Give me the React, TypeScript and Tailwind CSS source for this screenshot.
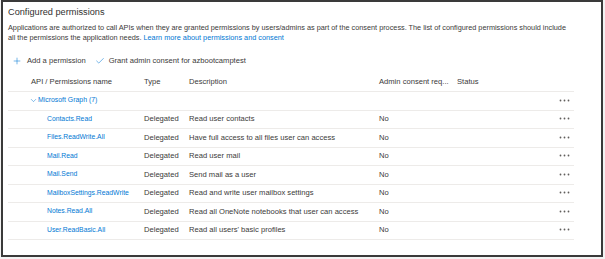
import { Plus, Check, ChevronDown } from 'lucide-react'

const rows = [
  { name: 'Contacts.Read', desc: 'Read user contacts' },
  { name: 'Files.ReadWrite.All', desc: 'Have full access to all files user can access' },
  { name: 'Mail.Read', desc: 'Read user mail' },
  { name: 'Mail.Send', desc: 'Send mail as a user' },
  { name: 'MailboxSettings.ReadWrite', desc: 'Read and write user mailbox settings' },
  { name: 'Notes.Read.All', desc: 'Read all OneNote notebooks that user can access' },
  { name: 'User.ReadBasic.All', desc: "Read all users' basic profiles" },
]

function Dots() {
  return (
    <svg width="11" height="3" viewBox="0 0 11 3" className="fill-[#605e5c]">
      <circle cx="1.5" cy="1.5" r="0.9" />
      <circle cx="5.5" cy="1.5" r="0.9" />
      <circle cx="9.5" cy="1.5" r="0.9" />
    </svg>
  )
}

export default function App() {
  return (
    <div className="w-[605px] h-[259px] bg-[#f3f3f3] pl-[1px] font-['Liberation_Sans',sans-serif] text-[#3b3a39]">
      <div className="w-[602px] h-[257px] border-2 border-[#3a3a3a] bg-white pl-[5px] pr-[29px]">
        {/* Title */}
        <div className="text-[9.2px] leading-none pt-[6px] h-[20px] text-[#323130]">
          Configured permissions
        </div>

        {/* Intro text */}
        <p className="text-[7.3px] leading-[9.5px] w-[560px] mt-[1px]">
          Applications are authorized to call APIs when they are granted permissions by users/admins as part of the consent process. The list of configured permissions should include all the permissions the application needs.{' '}
          <span className="text-[#0078d4]">Learn more about permissions and consent</span>
        </p>

        {/* Toolbar */}
        <div className="flex items-center h-[16px] mt-[11px] text-[7.6px] pl-[4px]">
          <Plus size={10} strokeWidth={1.3} className="text-[#0078d4]" />
          <span className="ml-[5px]">Add a permission</span>
          <Check size={10} strokeWidth={1.3} className="text-[#0078d4] ml-[9px]" />
          <span className="ml-[4px]">Grant admin consent for azbootcamptest</span>
        </div>

        {/* Table */}
        <div className="mt-[4px] w-[566px] text-[7.6px]">
          <div className="flex items-center h-[19px] border-b border-[#edebe9]">
            <span className="w-[136px] pl-[23px]">API / Permissions name</span>
            <span className="w-[45px]">Type</span>
            <span className="w-[190px]">Description</span>
            <span className="w-[78px]">Admin consent req...</span>
            <span>Status</span>
          </div>

          <div className="flex items-center h-[18.5px] pb-[1px] border-b border-[#edebe9]">
            <span className="w-[551px] pl-[21px] flex items-center text-[#0078d4] text-[6.9px]">
              <ChevronDown size={9} strokeWidth={1.3} className="text-[#0078d4]" />
              Microsoft Graph (7)
            </span>
            <Dots />
          </div>

          {rows.map((r) => (
            <div key={r.name} className="flex items-center h-[18.5px] pb-[1px] border-b border-[#edebe9]">
              <span className="w-[136px] pl-[39px] text-[#0078d4] text-[6.8px] whitespace-nowrap">{r.name}</span>
              <span className="w-[45px]">Delegated</span>
              <span className="w-[190px] whitespace-nowrap">{r.desc}</span>
              <span className="w-[180px]">No</span>
              <Dots />
            </div>
          ))}
        </div>
      </div>
    </div>
  )
}
